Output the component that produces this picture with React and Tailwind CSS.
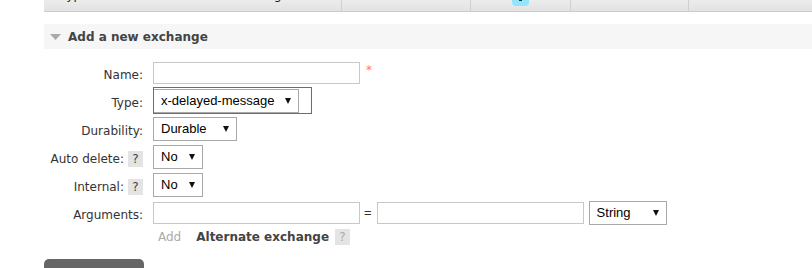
function Arrow() {
  return (
    <svg width="6" height="6" viewBox="0 0 6 6" className="shrink-0">
      <polygon points="0,0 6,0 3,6" fill="#111" />
    </svg>
  );
}

function Select({ value, width }) {
  return (
    <div
      className={`h-[24px] ${width} flex items-center justify-between pl-[7px] pr-[7px] border border-[#a9a9a9] bg-white font-['Liberation_Sans',Arial,sans-serif] text-[13px] text-black`}
    >
      <span>{value}</span>
      <Arrow />
    </div>
  );
}

function Input({ width = "w-[207px]" }) {
  return <div className={`h-[22px] ${width} border border-[#c8c8c8] bg-white`} />;
}

function Help({ light }) {
  return (
    <span
      className={`ml-[4px] w-[15px] h-[16px] bg-[#e4e4e4] flex items-center justify-center text-[12px] ${light ? "text-[#aaa]" : "text-[#444]"}`}
    >
      ?
    </span>
  );
}

function Row({ label, help, children }) {
  return (
    <div className="h-[28px] flex items-center">
      <div className="w-[143px] flex justify-end items-center translate-y-[2px] text-[#333]">
        <span>{label}</span>
        {help && <Help />}
      </div>
      <div className="ml-[10px] flex items-center">{children}</div>
    </div>
  );
}

export default function App() {
  return (
    <div className="w-[812px] h-[268px] overflow-hidden bg-white font-['DejaVu_Sans',Verdana,sans-serif] text-[12px] text-[#484848]">
      {/* tail of the exchanges table */}
      <div className="ml-[44px] h-[12px] flex border-b border-[#cccccc] bg-gradient-to-b from-[#ececec] to-[#e2e2e2] text-[#222]">
        <div className="w-[298px] border-r border-[#cfcfcf] overflow-hidden leading-[12px]">
          <div className="-mt-[11px] flex">
            <span className="ml-[17px]">Type</span>
            <span className="ml-[147px]">Routing</span>
          </div>
        </div>
        <div className="w-[129px] border-r border-[#cfcfcf] overflow-hidden leading-[12px]">
          <div className="-mt-[11px] ml-[62px]">,</div>
        </div>
        <div className="w-[100px] border-r border-[#cfcfcf] overflow-hidden">
          <div className="ml-[41px] w-[17px] h-[6px] rounded-b-[4px] bg-[#92e6fb] flex justify-center">
            <div className="w-[3px] h-[1px] bg-[#333]" />
          </div>
        </div>
        <div className="w-[118px] border-r border-[#cfcfcf]" />
        <div className="flex-1" />
      </div>

      {/* section header */}
      <div className="ml-[44px] mt-[12px] h-[25px] bg-[#f6f6f6] flex items-center">
        <svg width="11" height="6" viewBox="0 0 11 6" className="ml-[6px]">
          <polygon points="0,0 11,0 5.5,6" fill="#aaaaaa" />
        </svg>
        <span className="ml-[7px] font-bold text-[#444]">Add a new exchange</span>
      </div>

      {/* form */}
      <div className="mt-[10px] flex flex-col">
        <Row label="Name:">
          <Input />
          <span className="ml-[6px] -mt-[6px] text-[#f77] text-[12px]">*</span>
        </Row>
        <Row label="Type:">
          <div className="relative">
            <Select value="x-delayed-message" width="w-[146px]" />
            <div className="absolute left-0 -top-[2px] -bottom-[1px] w-[159px] border border-[#e53a3a]" />
          </div>
        </Row>
        <Row label="Durability:">
          <Select value="Durable" width="w-[84px]" />
        </Row>
        <Row label="Auto delete:" help>
          <Select value="No" width="w-[50px]" />
        </Row>
        <Row label="Internal:" help>
          <Select value="No" width="w-[50px]" />
        </Row>
        <Row label="Arguments:">
          <Input />
          <span className="ml-[4px] font-['Liberation_Sans',Arial,sans-serif] text-[13px] text-[#333]">=</span>
          <div className="ml-[5px]">
            <Input />
          </div>
          <div className="ml-[5px]">
            <Select value="String" width="w-[78px]" />
          </div>
        </Row>
        <div className="h-[20px] flex items-center">
          <span className="ml-[158px] text-[#aaa]">Add</span>
          <span className="ml-[15px] font-bold text-[#444]">Alternate exchange</span>
          <span className="ml-[2px]">
            <Help light />
          </span>
        </div>
      </div>

      <div className="ml-[44px] mt-[12px] w-[100px] h-[20px] rounded-t-[5px] bg-[#666666]" />
    </div>
  );
}
